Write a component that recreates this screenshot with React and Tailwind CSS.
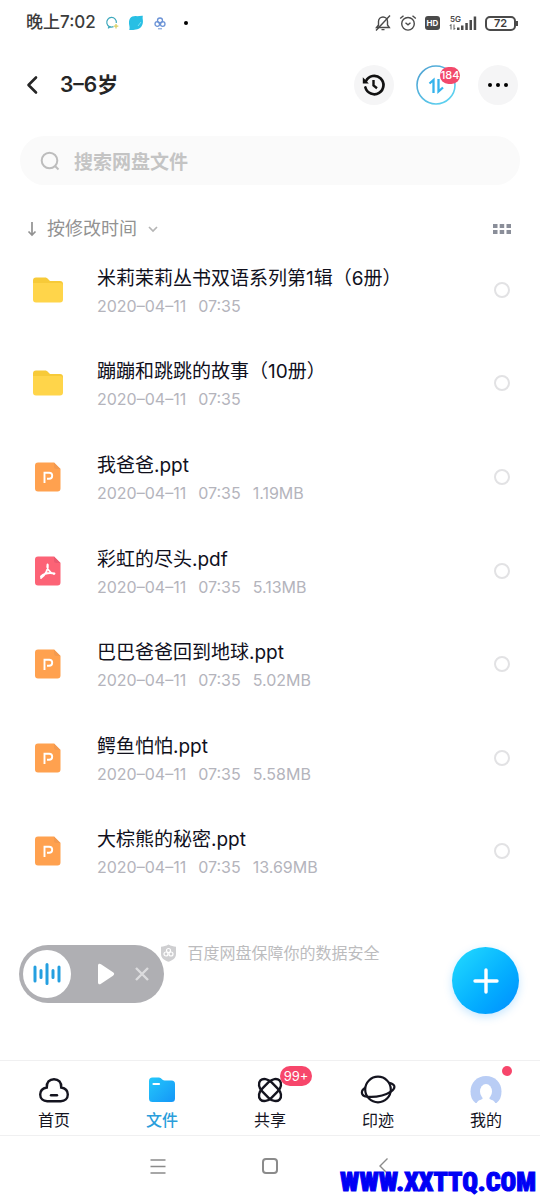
const files = [
  { kind: 'folder', name: '米莉茉莉丛书双语系列第1辑（6册）' },
  { kind: 'folder', name: '蹦蹦和跳跳的故事（10册）' },
  { kind: 'ppt', name: '我爸爸.ppt', size: '1.19MB' },
  { kind: 'pdf', name: '彩虹的尽头.pdf', size: '5.13MB' },
  { kind: 'ppt', name: '巴巴爸爸回到地球.ppt', size: '5.02MB' },
  { kind: 'ppt', name: '鳄鱼怕怕.ppt', size: '5.58MB' },
  { kind: 'ppt', name: '大棕熊的秘密.ppt', size: '13.69MB' },
];

function StatusBar() {
  return (
    <div className="flex h-11 items-center justify-between pl-[26px] pr-[22px] pt-0.5 text-[#3c3c3c]">
      <div className="flex items-center">
        <span className="text-[17px] font-medium">晚上7:02</span>
        <svg className="ml-2 size-4" viewBox="0 0 16 16" fill="none">
          <path d="M9.500 11.600A4.800 4.800 0 1 1 12.300 8" stroke="#3fa9bd" strokeWidth="1.2" />
          <path d="M5 11 4.200 13.200l2.600-1.200" stroke="#3fa9bd" strokeWidth="1" />
          <path d="M12 9v4.500M9.800 11.200h4.500" stroke="#d9cf63" strokeWidth="1.3" />
        </svg>
        <svg className="ml-2 size-4" viewBox="0 0 16 16">
          <path d="M2 3.500C3.500 1.500 6 .8 9 1.200c2 0 4-.6 5.800-.4-.3 1.400-.2 3 .1 4.600.6 5-3 9-7.100 9-1.800.2-4.500.9-6.600.6.600-1.500.4-3 .1-4.500C.8 8 .8 5.500 2 3.500Z" fill="#28bfe4" />
          <path d="m10 11 3-4" stroke="#8fe8f6" strokeWidth=".8" />
        </svg>
        <svg className="ml-2 size-4" viewBox="0 0 16 16" fill="none" stroke="#6b93d6" strokeWidth="1.300">
          <circle cx="8" cy="5.500" r="2.500" />
          <circle cx="5.300" cy="9" r="2.300" />
          <circle cx="10.700" cy="9" r="2.300" />
          <path d="M6 13.800h4" strokeWidth="1" />
        </svg>
        <span className="ml-4 size-1 rounded-full bg-black" />
      </div>
      <div className="flex items-center">
        <svg className="size-[18px]" viewBox="0 0 18 18" fill="none" stroke="#4a4a4a" strokeWidth="1.400">
          <path d="M4.500 12.500V7.500a4.500 4.500 0 0 1 9 0v3.500l1.800 2.500H2.500l2-2.500" />
          <path d="M7.500 15.600h3M16 1.500 2 16.500" />
        </svg>
        <svg className="ml-[7px] size-[18px]" viewBox="0 0 18 18" fill="none" stroke="#4a4a4a" strokeWidth="1.400">
          <circle cx="9" cy="9.800" r="6.300" />
          <path d="m6.500 8.800 2.500 2 2.500-2M1.200 4.500l3.300-2.800M16.800 4.500l-3.300-2.800" />
        </svg>
        <span className="ml-2 flex h-3.5 w-[15px] items-center justify-center rounded-[3px] bg-[#4a4a4a] text-[8px] font-bold text-white">HD</span>
        <svg className="ml-2 h-5 w-[29px]" viewBox="0 0 29 20" fill="#4a4a4a">
          <path d="M3 11.500v5M6 11.500v5M1.800 13 3 11.500M7.200 15 6 16.500" stroke="#4a4a4a" strokeWidth=".9" />
          <rect x="9" y="14.500" width="2.500" height="2.500" />
          <rect x="13" y="12.500" width="2.500" height="4.500" />
          <rect x="17.300" y="10" width="2.500" height="7" />
          <rect x="21.500" y="7" width="2.500" height="10" />
          <rect x="25.700" y="3.500" width="2.500" height="13.500" />
          <text x="2" y="9" fontSize="8" fontWeight="600" fontFamily="Inter, sans-serif">5G</text>
        </svg>
        <span className="ml-2 flex h-[15px] w-[31px] items-center justify-center rounded-[5px] border-2 border-[#4a4a4a] text-[11px] font-semibold">72</span>
        <span className="h-[5px] w-0.5 bg-[#4a4a4a]" />
      </div>
    </div>
  );
}

function Header() {
  return (
    <header className="flex h-[82px] items-center px-[22px]">
      <button aria-label="返回" className="flex size-5 items-center justify-center">
        <svg className="size-5" viewBox="0 0 20 20" fill="none" stroke="#262626" strokeWidth="2.600" strokeLinecap="round" strokeLinejoin="round">
          <path d="M14 2.500 6.500 10l7.500 7.500" />
        </svg>
      </button>
      <h1 className="ml-[18px] flex-1 text-[21px] font-semibold text-[#262626]">3–6岁</h1>
      <div className="flex items-center gap-[22px]">
        <button aria-label="历史记录" className="flex size-10 items-center justify-center rounded-full bg-[#f5f5f6]">
          <svg className="size-6" viewBox="0 0 24 24" fill="none" stroke="#111" strokeWidth="2.700">
            <path d="M4 8A9.200 9.200 0 1 1 3.400 14.500" strokeLinecap="round" />
            <path d="M11.500 7v5.500l3.500 2.700" strokeWidth="2.400" />
            <path d="M.8 4.200v6.300h6Z" fill="#111" stroke="none" />
          </svg>
        </button>
        <button aria-label="传输列表" className="relative size-10">
          <svg className="size-10" viewBox="0 0 40 40" fill="none">
            <defs>
              <linearGradient id="ring" x1="0" y1="0" x2="1" y2="1">
                <stop stopColor="#4f9fd0" />
                <stop offset="1" stopColor="#5fd9f5" />
              </linearGradient>
            </defs>
            <circle cx="20" cy="20" r="19" stroke="url(#ring)" strokeWidth="1.600" />
            <path d="M17.500 28V15l-4 3.500" stroke="#35b3ec" strokeWidth="2.300" />
            <path d="M22.500 14v12.500l4.500-4" stroke="#35b3ec" strokeWidth="2.300" />
          </svg>
          <span className="absolute -right-1 top-0.5 flex h-[17px] w-5 items-center justify-center rounded-full bg-[#f2496b] text-[11px] font-medium text-white">184</span>
        </button>
        <button aria-label="更多" className="flex size-10 items-center justify-center gap-1 rounded-full bg-[#f5f5f6]">
          <span className="size-1 rounded-full bg-black" />
          <span className="size-1 rounded-full bg-black" />
          <span className="size-1 rounded-full bg-black" />
        </button>
      </div>
    </header>
  );
}

function FileIcon({ kind }) {
  if (kind === 'folder') {
    return (
      <svg className="h-[30px] w-8 shrink-0" viewBox="0 0 32 30">
        <path d="M1 5.500a3 3 0 0 1 3-3h9c1.500 0 2 .5 3 1.500L18 6h10a3 3 0 0 1 3 3V14H1Z" fill="#f7ca38" />
        <path d="M1 8h27a3 3 0 0 1 3 3v13.500a3 3 0 0 1-3 3H4a3 3 0 0 1-3-3Z" fill="#ffd54a" />
      </svg>
    );
  }
  const ppt = kind === 'ppt';
  return (
    <svg className="h-[30px] w-8 shrink-0" viewBox="0 0 32 30">
      <path d="M6 .5h16l6.500 6.500V26.500a3 3 0 0 1-3 3H6a3 3 0 0 1-3-3V3.500a3 3 0 0 1 3-3Z" fill={ppt ? '#ffa14f' : '#fc6376'} />
      <path d="M22 .5 28.500 7h-4a2.500 2.500 0 0 1-2.500-2.500Z" fill={ppt ? '#f39a50' : '#ea5a70'} />
      {ppt ? (
        <path d="M12.500 21V10.700h4.700a3 3 0 0 1 0 6h-2.200" fill="none" stroke="#fff" strokeWidth="1.900" />
      ) : (
        <path d="M15.500 8.500c-1 3 .8 7.500 6.500 9.500M15.800 9c.8 4-2.500 10-6.800 13M9 20.500c3-2.800 8-4.200 13.500-3" fill="none" stroke="#fff" strokeWidth="1.900" strokeLinecap="round" />
      )}
    </svg>
  );
}

function FileRow({ file, id }) {
  return (
    <li className="flex flex-1 items-center pl-8 pr-[30px]">
      <FileIcon kind={file.kind} />
      <label htmlFor={id} className="ml-[33px] min-w-0 flex-1 pt-[3px]">
        <span className="block text-[19px] leading-7 text-[#10101c]">{file.name}</span>
        <span className="mt-px flex gap-3 text-base leading-6 text-[#b4b4bc]">
          <span>2020–04–11</span>
          <span>07:35</span>
          {file.size && <span>{file.size}</span>}
        </span>
      </label>
      <input id={id} type="checkbox" className="size-4 appearance-none rounded-full border-2 border-[#e2e2e4] checked:bg-[#2bb0f5]" />
    </li>
  );
}

function Player() {
  return (
    <div className="absolute left-[19px] top-[47px] flex h-[58px] w-[145px] items-center rounded-full bg-[#afafb3] pl-1">
      <button aria-label="正在播放" className="flex size-12 items-center justify-center rounded-full bg-white">
        <svg className="h-6 w-7" viewBox="0 0 28 24" stroke="#249fe0" strokeWidth="3" strokeLinecap="round">
          <path d="M2 5v14M8 8.500v7M14 2.500v19M20 8.500v7M26 5v14" />
        </svg>
      </button>
      <button aria-label="播放" className="ml-[26px]">
        <svg className="h-[22px] w-[18px]" viewBox="0 0 18 22" fill="#fff">
          <path d="M1 2.500C1 .8 2.500.2 4 1.300l12 8c1.600 1.100 1.600 2.300 0 3.400l-12 8C2.500 21.800 1 21.200 1 19.500Z" />
        </svg>
      </button>
      <button aria-label="关闭" className="ml-[19px]">
        <svg className="size-4" viewBox="0 0 16 16" stroke="#dcdcde" strokeWidth="2.400">
          <path d="m2 2 12 12M14 2 2 14" />
        </svg>
      </button>
    </div>
  );
}

const tabs = [
  {
    label: '首页',
    icon: (
      <svg className="h-8 w-9" viewBox="0 0 36 32" fill="none" stroke="#14141f" strokeWidth="2.400" strokeLinecap="round">
        <path d="M10.800 13.500C10.300 8.300 13.500 5.200 18 5.200s7.700 3.100 7.200 8.300c3.900.7 6.600 3.500 6.600 7.100 0 4-3 6.600-7 6.600H11.200c-4 0-7-2.600-7-6.600 0-3.600 2.700-6.400 6.600-7.100Z" />
        <path d="M15 21.300h6" />
      </svg>
    ),
  },
  {
    label: '文件',
    active: true,
    icon: (
      <svg className="h-8 w-9" viewBox="0 0 36 32">
        <defs>
          <linearGradient id="tabFolder" x1="0" y1="0" x2="1" y2="1">
            <stop stopColor="#24c8fb" />
            <stop offset="1" stopColor="#1596f7" />
          </linearGradient>
        </defs>
        <path d="M5 7a3.500 3.500 0 0 1 3.500-3.500h6.500c2.500 0 3 3 5.500 3h7A3.500 3.500 0 0 1 31 10v14.500a3.500 3.500 0 0 1-3.500 3.500h-19A3.500 3.500 0 0 1 5 24.500Z" fill="url(#tabFolder)" />
        <path d="M9.500 10H15" stroke="#fff" strokeWidth="2.200" strokeLinecap="round" />
      </svg>
    ),
  },
  {
    label: '共享',
    badge: '99+',
    icon: (
      <svg className="h-8 w-9" viewBox="0 0 36 32" fill="none" stroke="#14141f" strokeWidth="2.400">
        <rect x="4.500" y="9.500" width="27" height="13" rx="9" ry="6.500" transform="rotate(45 18 16)" />
        <rect x="4.500" y="9.500" width="27" height="13" rx="9" ry="6.500" transform="rotate(-45 18 16)" />
      </svg>
    ),
  },
  {
    label: '印迹',
    icon: (
      <svg className="h-8 w-9" viewBox="0 0 36 32" fill="none" stroke="#14141f" strokeWidth="2.200">
        <circle cx="18" cy="15.500" r="12.800" />
        <path d="M5.500 13.500C2.500 15.500 1.300 18 2.300 20.200c1.700 3.600 12 3.300 19.700 1.300 7-1.800 12.500-5.500 12.400-8.700 0-2-2-3.300-5.400-4" />
      </svg>
    ),
  },
  {
    label: '我的',
    dot: true,
    icon: (
      <svg className="h-8 w-9" viewBox="0 0 36 32">
        <path d="M7.500 29C4 26.500 2.500 22.500 2.500 17.500 2.500 8.500 9 2 18 2s15.500 6.500 15.500 15.500c0 5-1.500 9-5 11.500Z" fill="#b9cdf5" />
        <ellipse cx="18" cy="17.500" rx="6" ry="7.500" fill="#fff" />
        <path d="M14.500 21h7v4c2 1 4.500 1 6 4.500H8.500c1.500-3.500 4-3.500 6-4.500Z" fill="#fff" />
      </svg>
    ),
  },
];

function TabBar() {
  return (
    <nav className="grid h-[76px] grid-cols-5 border-y border-[#f0f0f1]">
      {tabs.map((t) => (
        <a key={t.label} href="#" className={`flex flex-col items-center pt-[13px] text-base leading-6 ${t.active ? 'font-medium text-[#2a9edb]' : 'text-[#14141f]'}`}>
          <span className="relative">
            {t.icon}
            {t.badge && <span className="absolute -top-2 left-7 flex h-5 w-8 items-center justify-center rounded-full bg-[#f7466b] text-[13px] text-white">{t.badge}</span>}
            {t.dot && <span className="absolute -right-2 -top-2 size-2.5 rounded-full bg-[#f7466b]" />}
          </span>
          <span className="mt-0.5">{t.label}</span>
        </a>
      ))}
    </nav>
  );
}

function SystemBar() {
  return (
    <div className="relative flex h-16 items-center justify-around px-[102px] pb-1">
      <button aria-label="最近任务">
        <svg className="size-4" viewBox="0 0 16 16" stroke="#8b8b8b" strokeWidth="1.400">
          <path d="M.5 2h15M.5 8.500h15M.5 15h15" />
        </svg>
      </button>
      <button aria-label="主屏幕" className="size-4 rounded border-2 border-[#8b8b8b]" />
      <button aria-label="返回上一页">
        <svg className="size-4" viewBox="0 0 16 16" fill="none" stroke="#8b8b8b" strokeWidth="1.400">
          <path d="M13.500.5 6 8l7.500 7.500" />
        </svg>
      </button>
      <span className="absolute bottom-0 right-1 font-['Roboto_Condensed','Roboto',sans-serif] text-[26px] font-black leading-9 text-[#0000f5] [-webkit-text-stroke:1px_#0000f5]">WWW.XXTTQ.COM</span>
    </div>
  );
}

export default function App() {
  return (
    <div className="flex min-h-screen flex-col bg-white font-['Inter','Noto_Sans_CJK_SC',sans-serif]">
      <StatusBar />
      <Header />
      <div className="mx-5 mt-2.5 flex h-[49px] items-center rounded-full bg-[#fafafa] pl-5">
        <svg className="size-5" viewBox="0 0 20 20" fill="none" stroke="#bdbdbd" strokeWidth="2">
          <circle cx="9.500" cy="9.500" r="7.800" />
          <path d="m15 15 3.500 3.500" />
        </svg>
        <input type="search" aria-label="搜索网盘文件" placeholder="搜索网盘文件" className="ml-3.5 h-full min-w-0 flex-1 bg-transparent pt-1 text-[19px] font-semibold text-[#262626] outline-none placeholder:text-[#c4c4c4]" />
      </div>
      <div className="mt-[30px] flex h-7 items-center justify-between pl-[26px] pr-[29px]">
        <button className="flex items-center text-[18px] leading-7 text-[#929292]">
          <svg className="h-4 w-3" viewBox="0 0 12 16" fill="none" stroke="#929292" strokeWidth="1.700">
            <path d="M6 1v12.500M2.500 10.500 6 14l3.500-3.500" />
          </svg>
          <span className="ml-[9px]">按修改时间</span>
          <svg className="ml-2.5 size-3" viewBox="0 0 12 12" fill="none" stroke="#b5b5b5" strokeWidth="1.700">
            <path d="m2 4 4 4 4-4" />
          </svg>
        </button>
        <button aria-label="网格视图">
          <svg className="h-3 w-[18px]" viewBox="0 0 18 12" fill="#8a8e99">
            <path d="M0 1h4.500v4H0ZM6.700 1h4.500v4H6.700ZM13.500 1H18v4h-4.500ZM0 7h4.500v4H0ZM6.700 7h4.500v4H6.700ZM13.500 7H18v4h-4.500Z" />
          </svg>
        </button>
      </div>
      <ul className="flex flex-1 flex-col">
        {files.map((f, i) => (
          <FileRow key={f.name} file={f} id={`file-${i}`} />
        ))}
      </ul>
      <div className="relative flex h-[162px] items-start justify-center pt-[43px]">
        <p className="flex items-center text-base leading-6 text-[#bcbcbe]">
          <svg className="mr-2.5 h-[18px] w-[17px]" viewBox="0 0 17 18">
            <path d="M8.500.5C11 2 13.500 2.500 16 2.800V10c0 4-3.500 6.500-7.500 7.700C4.500 16.500 1 14 1 10V2.800C3.500 2.500 6 2 8.500.5Z" fill="#cfcfd1" />
            <g fill="none" stroke="#fff" strokeWidth="1.200">
              <circle cx="8.500" cy="6.500" r="2" />
              <circle cx="6" cy="10" r="2" />
              <circle cx="11" cy="10" r="2" />
            </g>
          </svg>
          百度网盘保障你的数据安全
        </p>
        <Player />
        <button aria-label="新建" className="absolute right-[21px] top-[49px] flex size-[67px] items-center justify-center rounded-full bg-linear-to-br from-[#24dcff] to-[#068cff] shadow-[0_3px_8px_rgba(30,160,255,0.25)]">
          <svg className="size-[26px]" viewBox="0 0 26 26" stroke="#fff" strokeWidth="3.400" strokeLinecap="round">
            <path d="M13 2v22M2 13h22" />
          </svg>
        </button>
      </div>
      <TabBar />
      <SystemBar />
    </div>
  );
}
